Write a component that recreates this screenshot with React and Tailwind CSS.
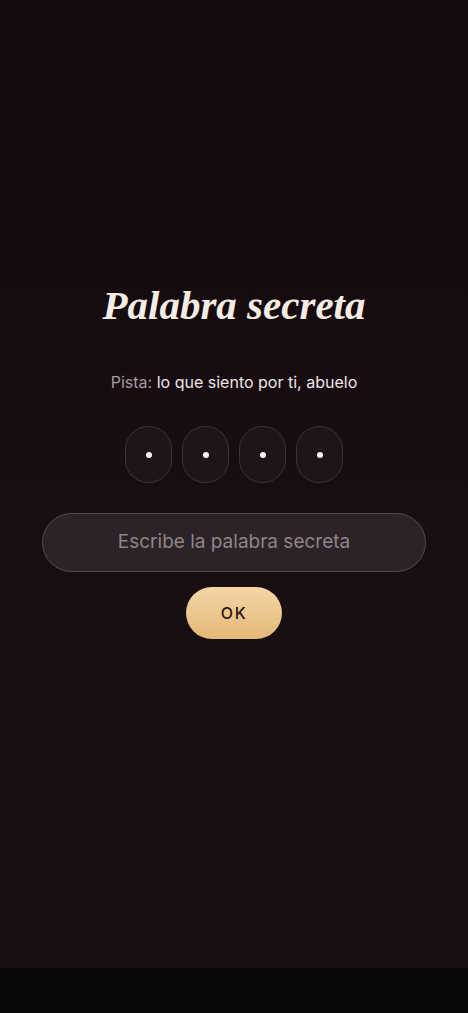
export default function App() {
    const slots = [0, 1, 2, 3];

    return (
        <div className="min-h-screen w-full flex flex-col bg-[#0a0909]" style={{ fontFamily: "Inter, 'Noto Sans', sans-serif" }}>
            {/* Main area */}
            <div className="h-[968px] w-full flex flex-col items-center pt-[279px] bg-gradient-to-b from-[#130a0e] via-[#180d11] to-[#1a0f12]">
                <h1
                    className="text-[41px] leading-[52px] italic font-bold text-[#f6ece4]"
                    style={{ fontFamily: "'Liberation Serif', 'DejaVu Serif', serif" }}
                >
                    Palabra secreta
                </h1>

                <p className="mt-[39px] text-[16px] leading-6 text-[#ece6e6]">
                    <span className="text-[#a59ca0]">Pista:</span> lo que siento por ti, abuelo
                </p>

                {/* Slots */}
                <div className="mt-[32px] flex gap-[10px]">
                    {slots.map((i) => (
                        <div
                            key={i}
                            className="w-[47px] h-[57px] rounded-[23px] border border-[#3d3337] bg-[#1d1519] flex items-center justify-center"
                        >
                            <span className="w-[6px] h-[6px] rounded-full bg-[#fbf4f2]"></span>
                        </div>
                    ))}
                </div>

                {/* Input */}
                <div className="mt-[30px] w-[384px] h-[59px] rounded-full border border-[#564b4f] bg-[#2b2327] flex items-center justify-center">
                    <span className="text-[19px] text-[#8f8589]">Escribe la palabra secreta</span>
                </div>

                {/* Button */}
                <button className="mt-[15px] w-[96px] h-[52px] rounded-full bg-gradient-to-b from-[#f4d6a6] to-[#e4b878] text-[#2a1710] text-[16px] font-medium tracking-[0.1em]">
                    OK
                </button>
            </div>

            {/* Bottom bar */}
            <div className="h-[45px] w-full bg-[#0a0909]"></div>
        </div>
    );
}
